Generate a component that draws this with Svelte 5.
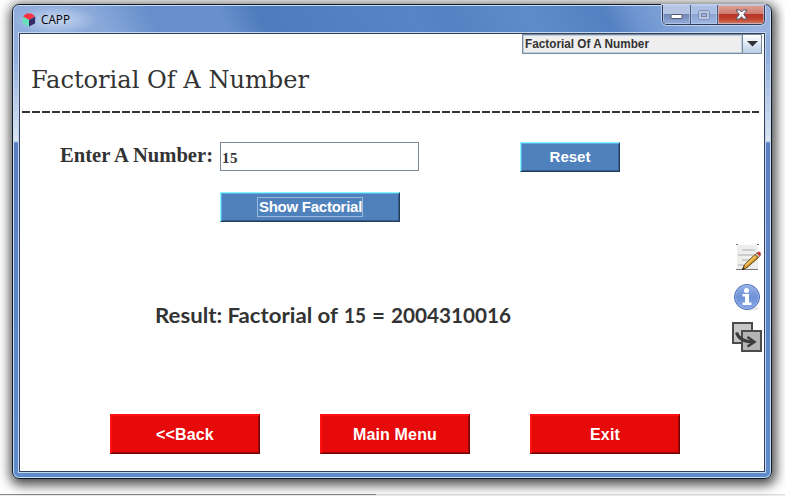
<script>
  const actions = ['<<Back', 'Main Menu', 'Exit'];
  let value = $state('15');
  let product = $state('2004310016');
</script>

<div class="desktop">
  <div class="window">
    <header class="titlebar">
      <svg class="logo" width="14" height="14" viewBox="0 0 14 14">
        <path d="M1 3.200 4.500 .5h5L13 3.200 7 7z" fill="#fb3340" />
        <path d="M.5 3.500 7 7v6.500L1 10.500z" fill="#64e3ba" />
        <path d="M13.300 3.500 7 7v6.500l6-3z" fill="#332c67" />
      </svg>
      <svg class="caption" width="34" height="20"><text x="0" y="14" textLength="29" lengthAdjust="spacingAndGlyphs">CAPP</text></svg>
      <div class="controls">
        <span class="ctl min"><svg width="13" height="6"><rect x="1" y=".5" width="11" height="4" rx=".5" fill="#fff" stroke="#50566b" /></svg></span>
        <span class="ctl max"><svg width="12" height="10"><rect x=".5" y=".5" width="11" height="9" rx="1" fill="#b9c7e3" stroke="#8392b5" /><rect x="3.500" y="3.500" width="5" height="3" fill="#9fb2da" stroke="#7584a6" /></svg></span>
        <span class="ctl close"><svg width="13" height="11"><path d="M1 1h3.500l2 2 2-2H12L8.800 5.300 12 10H8.500l-2-2.300-2 2.300H1l3.200-4.700z" fill="#f8f8fa" stroke="#555769" /></svg></span>
      </div>
    </header>

    <main class="panel">
      <div class="combo">
        <span class="choice"><svg width="130" height="16"><text x="1" y="12" textLength="124" lengthAdjust="spacingAndGlyphs">Factorial Of A Number</text></svg></span>
        <span class="arrow"><svg width="11" height="6"><path d="M0 0h11L5.500 5.500z" fill="#333" /></svg></span>
      </div>

      <svg class="heading" width="300" height="36">
        <text x="0" y="25" textLength="278" lengthAdjust="spacingAndGlyphs">Factorial Of A Number</text>
      </svg>
      <div class="rule"></div>

      <div class="entry">
        <svg class="label" width="154" height="30"><text x="0" y="20" textLength="153" lengthAdjust="spacingAndGlyphs">Enter A Number:</text></svg>
        <input bind:value />
        <button class="blue reset"><span>Reset</span></button>
      </div>
      <button class="blue show"><span class="focus">Show Factorial</span></button>

      <div class="middle">
        <svg class="result" width="365" height="30">
          <text x="0" y="21" textLength="183" lengthAdjust="spacingAndGlyphs">Result: Factorial of</text>
          <text x="189" y="21" textLength="22" lengthAdjust="spacingAndGlyphs">{value}</text>
          <text x="217" y="21" textLength="13" lengthAdjust="spacingAndGlyphs">=</text>
          <text x="236" y="21" textLength="120" lengthAdjust="spacingAndGlyphs">{product}</text>
        </svg>
        <nav class="tools">
          <svg width="30" height="30" viewBox="0 0 30 30">
            <path d="M5 3h21v25H5z" fill="#eeeeed" />
            <path d="M4 2.500h2m19 0h2M4 27.500h22" stroke="#777" />
            <path d="M10 8h13M6 13h15M10 18h9M6 23h9" stroke="#cdcdcd" stroke-width="2" />
            <path d="M23 12.500l3.500 3L15 25.500l-4.500 2 1.800-4.500z" fill="#d99a2b" stroke="#604018" />
            <path d="M23.500 14 13.500 23.500" stroke="#f5cf62" stroke-width="1.500" />
            <path d="M10 28l1-2.500 1.500 1.500z" fill="#222" />
            <path d="M23 12.500l2-1.500 3.500 2.500-2 2z" fill="#c9c7b8" stroke="#6f5c45" stroke-width=".7" />
            <path d="M25 11q3-2 3.500.500 0 1.300-1 2z" fill="#e7312f" stroke="#a32320" stroke-width=".7" />
          </svg>
          <svg width="30" height="30" viewBox="0 0 30 30">
            <defs><linearGradient id="info" x2="0" y2="1"><stop offset="0" stop-color="#98b2e8" /><stop offset=".5" stop-color="#6f91d7" /><stop offset="1" stop-color="#86a7e8" /></linearGradient></defs>
            <ellipse cx="19" cy="26.500" rx="8" ry="2" fill="#e8e8e8" />
            <circle cx="15" cy="15" r="12.500" fill="url(#info)" stroke="#496cb4" />
            <circle cx="15" cy="15" r="11.500" fill="none" stroke="#a7bdec" stroke-opacity=".6" />
            <circle cx="14.500" cy="8.500" r="2.500" fill="#fff" />
            <path d="M10.500 12h6.500v8.500h2.500V23h-9v-2.500H13V14.500h-2.500z" fill="#fff" />
          </svg>
          <svg width="30" height="30" viewBox="0 0 30 30">
            <rect x="1" y="1" width="19" height="20" fill="#c7c7c7" stroke="#4b4b4b" stroke-width="2" />
            <rect x="10" y="9" width="19" height="20" fill="#b4b4b4" stroke="#4b4b4b" stroke-width="2" />
            <path d="M4.500 10.500C6 16 10 19.500 21 20" fill="none" stroke="#3c3c3c" stroke-width="3" />
            <path d="M15.500 15l7 5-7 4.500" fill="none" stroke="#3c3c3c" stroke-width="2.500" />
          </svg>
        </nav>
      </div>

      <footer class="actions">
        {#each actions as action}
          <button class="red">{action}</button>
        {/each}
      </footer>
    </main>
  </div>
  <div class="shelf"></div>
</div>

<style>
  :global(body) { margin: 0; background: #fff; }
  .desktop {
    width: 785px; height: 496px; overflow: hidden; box-sizing: border-box;
    padding: 4px 0 0 12px; background: #fff; position: relative;
  }
  .window {
    position: relative; z-index: 1;
    box-sizing: border-box; width: 760px; height: 475px; padding: 1px 6px 6px 7px;
    border: 1px solid #111a2a; border-radius: 7px;
    background: linear-gradient(180deg, #94afdc 0, #91addb 50px, #dbe5f3 136px, #587fc2 138px, #5f8acb 100%);
    box-shadow: inset 0 0 0 1px #c8dcf2, 1px 3px 12px 3px #000000b8;
  }
  .titlebar {
    display: flex; height: 28px; margin: 0 -5px 0 -6px; padding: 0 5px 0 6px; align-items: flex-start;
    border-radius: 5px 5px 0 0;
    background:
      radial-gradient(ellipse 42px 15px at 42px 14px, #d7e3f5cc, #d7e3f500),
      linear-gradient(62deg, #91afdc 0, #88a8da 12%, #678fcb 19%, #6890cd 28%, #4f7bbc 33%, #527fc0 42%, #5884c6 53%, #5581c2 57%, #5f8bcb 68%, #5480c1 78%, #6f95d1 82%, #90afdc 91%, #9bb5df 100%);
  }
  .logo { margin: 7px 0 0 2px; }
  .caption { margin: 4px 0 0 5px; font: 12.500px "Open Sans", "Noto Sans", sans-serif; }
  .caption text { fill: #000; }
  .controls {
    display: flex; margin: -1px 0 0 auto; height: 19px; width: 101px;
    border: 1px solid #303c57; border-top: 0; border-radius: 0 0 5px 5px; overflow: hidden;
    box-shadow: 0 0 0 1px #bdd0ed;
  }
  .ctl { display: flex; align-items: center; justify-content: center; box-shadow: inset 0 0 0 1px #c4d4ef99; }
  .min { width: 27px; border-right: 1px solid #46597e; background: linear-gradient(#b5c4e2 0 45%, #7288b4 50%, #94addb); }
  .min svg { margin-top: 5px; }
  .max { width: 26px; border-right: 1px solid #4d5874; background: linear-gradient(#abc0e7 0 45%, #8ba4d2 50%, #9db6e4); }
  .close { flex: 1; background: linear-gradient(#dfa398 0, #cf7b6d 45%, #b63427 50%, #c1432f 75%, #d97f62); }
  .panel {
    display: flex; flex-direction: column; height: 437px; width: 744px;
    background: #fff; outline: 1px solid #303f5c; box-shadow: 0 0 0 2px #c4d8f0;
    font-family: "Liberation Sans", Arial, sans-serif;
  }
  .combo {
    display: flex; align-self: flex-end; box-sizing: border-box; width: 240px; height: 20px; margin-right: 2px;
    border: 1px solid #7a8a99; background: #eee; flex: none;
  }
  .choice { flex: 1; border: 1px solid #b8cfe5; font-size: 12px; font-weight: bold; }
  .choice svg, .label, .heading, .result { display: block; }
  text { fill: #333; }
  .arrow {
    display: flex; align-items: center; justify-content: center; width: 18px; border-left: 1px solid #7a8a99;
    background: linear-gradient(#fff, #dce8f3 50%, #b8cfe5);
  }
  .heading { margin: 9px 0 0 11px; flex: none; font: 24px "DejaVu Serif", serif; }
  .rule {
    flex: none; height: 2px; margin: 12px 5px 0 2px;
    background: repeating-linear-gradient(90deg, #333 0 8px, #fff 8px 10px);
  }
  .entry { display: flex; height: 30px; margin: 29px 0 0 40px; flex: none; }
  .label { margin-right: 6px; font: bold 20px "Liberation Serif", serif; }
  input {
    box-sizing: border-box; width: 199px; height: 29px; padding: 3px 1px 0; margin: 0;
    border: 1px solid #7a8a99; border-radius: 0; outline: 0; color: #333;
    font: bold 15px "Liberation Serif", serif; letter-spacing: .6px;
  }
  button {
    display: flex; align-items: center; justify-content: center; box-sizing: border-box;
    padding: 0; margin: 0; border-radius: 0; color: #fff; font: bold 15px "Liberation Sans", sans-serif;
  }
  .blue {
    height: 30px; background: #4f81bd; border: 1px solid; border-color: #80ffff #233f5e #233f5e #80ffff;
    box-shadow: inset 1px 1px #67a8ed, inset -1px -1px #355b86;
  }
  .reset { width: 100px; margin-left: 101px; }
  .reset span { margin-top: -1px; }
  .show { width: 180px; margin: 20px 0 0 200px; flex: none; }
  .focus { border: 1px solid #9bbbdc; padding: 0 0 1px 1px; line-height: 17px; letter-spacing: -.25px; }
  .middle { display: flex; justify-content: space-between; height: 192px; flex: none; }
  .result { margin: 80px 0 0 135px; font: bold 20px Lato, sans-serif; }
  .tools { display: flex; flex-direction: column; gap: 10px; margin: 20px 2px 0 0; }
  .actions { display: flex; gap: 60px; margin-left: 90px; }
  .red {
    width: 150px; height: 40px; padding: 1px 0 0; font-size: 16px; letter-spacing: .15px; background: #e60a0a;
    border: 1px solid; border-color: #ff1111 #730505 #730505 #ff1111;
    box-shadow: inset 1px 1px #ff1010, inset -1px -1px #a10707;
  }
  .shelf {
    position: absolute; left: 0; right: 0; bottom: 0; height: 2px;
    background: linear-gradient(90deg, #888 0 376px, #ddd 376px) 0 0 / 100% 1px no-repeat, #eee;
  }
</style>
